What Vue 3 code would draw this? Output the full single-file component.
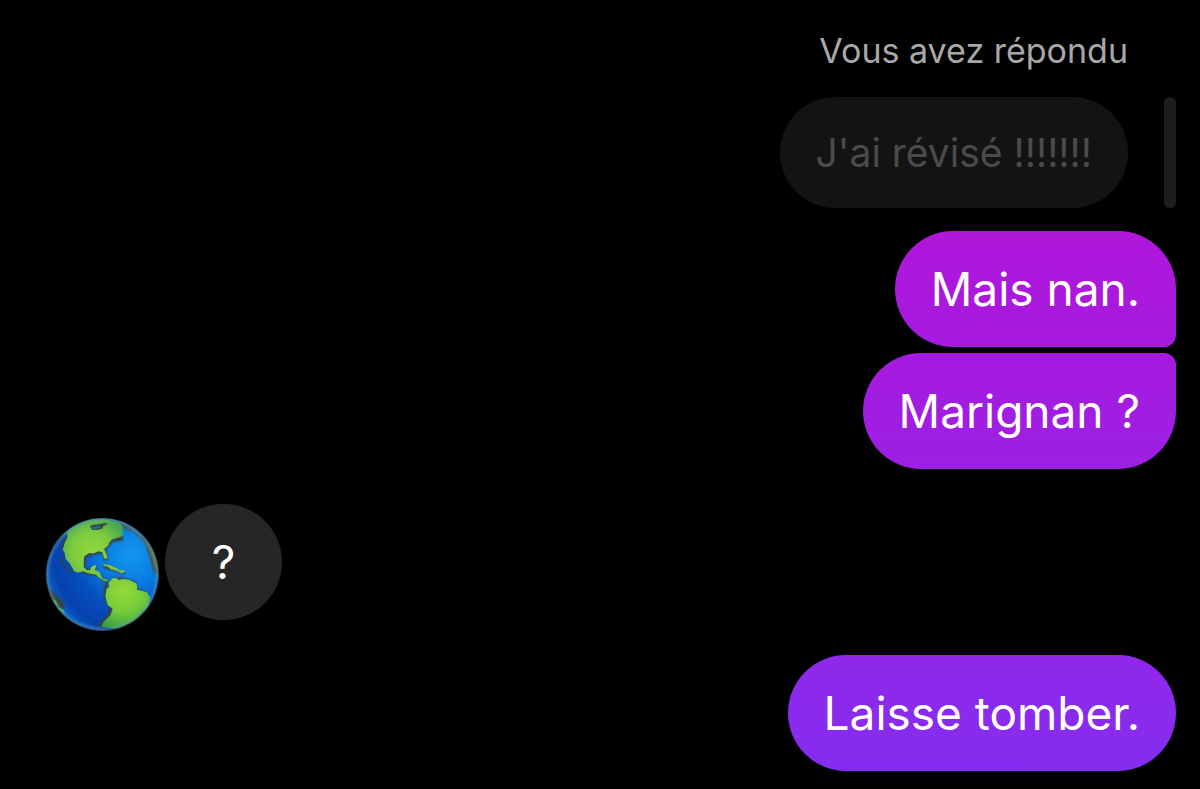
<script setup>
const sent = [
  { id: 1, text: 'Mais nan.', kind: 'first' },
  { id: 2, text: 'Marignan ?', kind: 'last' },
]
</script>

<template>
  <main class="chat">
    <section class="reply">
      <p class="label">Vous avez répondu</p>
      <blockquote class="quote">
        <p class="quoted">J'ai révisé !!!!!!!</p>
      </blockquote>
    </section>

    <section class="group">
      <p v-for="m in sent" :key="m.id" class="bubble" :class="m.kind">{{ m.text }}</p>
    </section>

    <section class="received">
      <svg class="globe" viewBox="0 0 375 375" role="img" aria-label="Globe">
        <defs>
          <radialGradient id="sea" cx="0.76" cy="0.32" r="0.82">
            <stop offset="0" stop-color="#1496f0" />
            <stop offset="0.35" stop-color="#087ae2" />
            <stop offset="0.6" stop-color="#054fc0" />
            <stop offset="0.85" stop-color="#0641ad" />
            <stop offset="1" stop-color="#0868cc" />
          </radialGradient>
          <radialGradient id="north" gradientUnits="userSpaceOnUse" cx="155" cy="125" r="120">
            <stop offset="0" stop-color="#92d838" />
            <stop offset="0.5" stop-color="#7ccb40" />
            <stop offset="1" stop-color="#3d9f50" />
          </radialGradient>
          <radialGradient id="south" gradientUnits="userSpaceOnUse" cx="250" cy="245" r="120">
            <stop offset="0" stop-color="#94da36" />
            <stop offset="0.5" stop-color="#76cb3a" />
            <stop offset="1" stop-color="#349a48" />
          </radialGradient>
          <radialGradient id="rim">
            <stop offset="0.91" stop-color="#79bfe0" stop-opacity="0" />
            <stop offset="0.97" stop-color="#6a9fb4" stop-opacity="0.35" />
            <stop offset="1" stop-color="#3c5c66" stop-opacity="0.7" />
          </radialGradient>
          <clipPath id="disc"><circle cx="187" cy="193" r="168" /></clipPath>
          <filter id="soft" x="-10%" y="-10%" width="120%" height="120%">
            <feGaussianBlur stdDeviation="2.5" />
          </filter>
        </defs>
        <g clip-path="url(#disc)">
          <circle cx="187" cy="193" r="168" fill="url(#sea)" />
          <g filter="url(#soft)" fill="#3c3f38">
            <path d="M67 97 L82 75 L80 110 L67 128 L69 157 L100 189 L92 189 L64 158Z" />
            <path d="M247 72 L249 92 L217 96 L207 111 L197 119 L205 145 L202 151 L191 148 L187 130 L155 136 L137 145 L135 174 L155 181 L160 167 L171 173 L164 188 L184 195 L194 208 L211 211 L204 217 L186 211 L171 199 L126 190 L128 141 L160 121 L190 124 L208 92Z" />
            <path d="M187 164 L213 168 L235 184 L257 188 L250 193 L225 184 L190 174Z" />
            <path d="M205 209 L193 221 L191 262 L208 290 L205 312 L172 349 L187 351 L218 314 L218 293 L202 268 L204 222Z M207 202 L244 201 L288 217 L293 237 L320 246 L317 253 L285 244 L281 225 L241 208Z" />
            <path d="M225 36 L262 46 L320 91 L345 140 L355 188 L344 195 L334 160 L316 100 L280 66 L240 50Z" fill="#4b513c" />
            <path d="M27 234 L70 277 L72 298 L54 295 L28 265Z" />
          </g>
          <path fill="url(#north)" d="M82 63 Q133 17 203 29 L240 40 L250 54 L247 61 L252 72 L242 81 L216 88 L207 98 L206 105 L192 117 L203 141 L199 147 L192 144 L187 127 L176 124 L162 130 L146 130 L132 140 L131 171 L140 181 L151 181 L153 172 L164 165 L169 168 L164 180 L178 185 L188 205 L205 209 L204 214 L194 214 L175 202 L168 194 L145 190 L129 184 L112 188 L102 183 L90 161 L77 146 L73 126 L68 119 L75 97 L82 83Z" />
          <path fill="#3b4742" d="M150 50 Q154 43 176 43 L196 39 L204 42 L190 48 L187 56 L171 60 L156 59Z" />
          <path fill="#1674a4" d="M155 51 L178 48 L184 51 L168 57 L158 57Z" />
          <path fill="#7cc53e" d="M190 163 L210 165 L234 176 L239 181 L256 181 L252 187 L243 190 L233 183 L213 178 L203 170 L190 167Z" />
          <path fill="url(#south)" d="M220 204 L229 205 L237 211 L248 207 L266 209 L287 219 L292 227 L291 239 L320 246 L331 262 L325 290 L285 330 L236 356 L185 351 L190 337 L211 316 L218 296 L203 285 L196 259 L200 236 L208 231 L206 217Z" />
          <path fill="#5a6a3c" d="M315 90 L330 100 L350 155 L354 183 L345 172 L333 135Z" />
          <path fill="#3cae53" d="M36 267 L48 272 L55 291 L72 301 L75 311 L56 299Z" />
          <path fill="none" stroke="#3d947d" stroke-width="5" stroke-opacity="0.65" d="M70 75 Q155 0 260 42" />
        </g>
        <circle cx="187" cy="193" r="170" fill="url(#rim)" />
      </svg>
      <p class="bubble incoming">?</p>
    </section>

    <section class="group final">
      <p class="bubble single">Laisse tomber.</p>
    </section>
  </main>
</template>

<style>
body {
  background: #000;
}
</style>

<style scoped>
.chat {
  display: flex;
  flex-direction: column;
  padding: 27px 24px 18px 40px;
  background: #000;
  color: #fff;
  font-family: Inter, "Liberation Sans", sans-serif;
}
p,
blockquote {
  margin: 0;
}
.reply {
  display: flex;
  flex-direction: column;
  align-items: flex-end;
  gap: 22px;
}
.label {
  margin-right: 48px;
  color: #a8a8a8;
  font-size: 34px;
  line-height: 48px;
}
.quote {
  display: flex;
  gap: 36px;
}
.quote::after {
  content: "";
  width: 12px;
  border-radius: 6px;
  background: #1d1d1d;
}
.quoted {
  padding: 30px 36px 29px;
  border-radius: 56px;
  background: #131313;
  color: #4b4b4b;
  font-size: 39px;
  line-height: 52px;
}
.group {
  display: flex;
  flex-direction: column;
  align-items: flex-end;
  gap: 6px;
  margin-top: 23px;
}
.bubble {
  padding: 30px 36px;
  border-radius: 58px;
  font-size: 46px;
  line-height: 56px;
}
.first {
  border-bottom-right-radius: 12px;
  background: linear-gradient(#b017da, #a61adf);
}
.last {
  border-top-right-radius: 12px;
  background: linear-gradient(#a61adf, #9c20e4);
}
.received {
  display: flex;
  align-items: flex-start;
  margin-top: 35px;
}
.globe {
  width: 125px;
  height: 125px;
  margin-top: 6px;
}
.incoming {
  min-width: 45px;
  background: #262626;
  text-align: center;
}
.final {
  margin-top: 20px;
}
.single {
  background: linear-gradient(#9028ea, #842df0);
}
</style>
